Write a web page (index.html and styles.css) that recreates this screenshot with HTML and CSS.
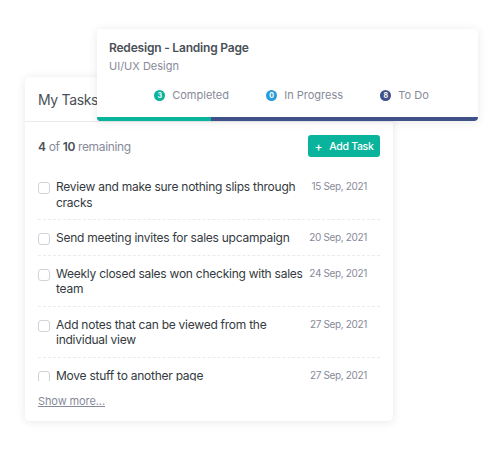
FILE: index.html
```html
<!DOCTYPE html>
<html>
<head>
<meta charset="utf-8">
<link rel="stylesheet" href="styles.css">
</head>
<body>
<div class="stage">
  <div class="card tasks">
    <div class="card-header">
      <h4 class="card-title">My Tasks</h4>
    </div>
    <div class="card-body">
      <div class="toolbar">
        <div class="remaining"><b>4</b> of <b>10</b> remaining</div>
        <button class="btn-add"><span class="plus">+</span>Add Task</button>
      </div>
      <ul class="task-list">
        <li class="task">
          <span class="check"></span>
          <span class="task-text">Review and make sure nothing slips through cracks</span>
          <span class="task-date">15 Sep, 2021</span>
        </li>
        <li class="task">
          <span class="check"></span>
          <span class="task-text">Send meeting invites for sales upcampaign</span>
          <span class="task-date">20 Sep, 2021</span>
        </li>
        <li class="task">
          <span class="check"></span>
          <span class="task-text">Weekly closed sales won checking with sales team</span>
          <span class="task-date">24 Sep, 2021</span>
        </li>
        <li class="task">
          <span class="check"></span>
          <span class="task-text">Add notes that can be viewed from the individual view</span>
          <span class="task-date">27 Sep, 2021</span>
        </li>
        <li class="task">
          <span class="check"></span>
          <span class="task-text">Move stuff to another page</span>
          <span class="task-date">27 Sep, 2021</span>
        </li>
      </ul>
      <a class="show-more" href="#">Show more...</a>
    </div>
  </div>

  <div class="card project">
    <div class="project-body">
      <h5 class="project-title">Redesign - Landing Page</h5>
      <p class="project-sub">UI/UX Design</p>
      <div class="stats">
        <span class="stat"><span class="dot dot-success">3</span>Completed</span>
        <span class="stat"><span class="dot dot-info">0</span>In Progress</span>
        <span class="stat"><span class="dot dot-primary">8</span>To Do</span>
      </div>
    </div>
    <div class="progress">
      <div class="progress-bar" style="width: 30%"></div>
    </div>
  </div>
</div>
</body>
</html>
```

FILE: styles.css
```css
* { box-sizing: border-box; }
html, body { margin: 0; background: #fff; }
body {
  font-family: "Inter", "Open Sans", sans-serif;
  color: #495057;
  width: 500px;
  height: 450px;
  overflow: hidden;
}
.stage {
  position: relative;
  padding: 77px 0 0 25px;
}
.card {
  background: #fff;
  border-radius: 5px;
  box-shadow: 0 1px 8px rgba(56, 65, 74, 0.12);
}
.tasks {
  width: 368px;
  height: 344px;
}
.card-header {
  height: 45px;
  display: flex;
  align-items: center;
  padding: 0 13px;
  border-bottom: 1px solid #e9ebec;
}
.card-title {
  margin: 0;
  font-size: 14px;
  font-weight: 400;
  letter-spacing: -0.35px;
  color: #495057;
}
.card-body {
  padding: 13px 13px 12px;
}
.toolbar {
  display: flex;
  justify-content: space-between;
  align-items: center;
  height: 22px;
}
.remaining {
  font-size: 12px;
  letter-spacing: -0.35px;
  color: #878a99;
}
.remaining b {
  font-weight: 600;
  color: #495057;
}
.btn-add {
  height: 22px;
  width: 72px;
  border: 0;
  border-radius: 3px;
  background: #0ab39c;
  color: #fff;
  font-family: inherit;
  font-size: 10.5px;
  letter-spacing: -0.3px;
  font-weight: 500;
  display: flex;
  align-items: center;
  justify-content: center;
  padding: 0;
}
.plus {
  font-size: 12px;
  margin-right: 7px;
}
.task-list {
  list-style: none;
  margin: 12px 0 0;
  padding: 0;
  height: 212px;
  overflow: hidden;
}
.task {
  display: grid;
  grid-template-columns: 12px 1fr 58px;
  column-gap: 6px;
  align-items: start;
  padding: 10px 13px 9px 0;
  border-bottom: 1px dashed #e9ebec;
}
.check {
  width: 12px;
  height: 12px;
  border: 1px solid #ced4da;
  border-radius: 3px;
  margin-top: 3px;
}
.task-text {
  font-size: 12px;
  letter-spacing: -0.25px;
  line-height: 15.5px;
  color: #343a40;
}
.task-date {
  font-size: 10px;
  letter-spacing: -0.35px;
  line-height: 15.5px;
  color: #878a99;
  text-align: right;
  white-space: nowrap;
}
.show-more {
  display: inline-block;
  margin-top: 12px;
  font-size: 11px;
  letter-spacing: -0.1px;
  line-height: 16px;
  color: #878a99;
}
.project {
  position: absolute;
  left: 97px;
  top: 29px;
  width: 381px;
  height: 92px;
  overflow: hidden;
  border-radius: 4px;
  display: flex;
  flex-direction: column;
}
.project-body {
  flex: 1;
  padding: 10px 12px 0;
}
.project-title {
  margin: 0;
  font-size: 12px;
  letter-spacing: -0.2px;
  line-height: 17px;
  font-weight: 600;
  color: #495057;
}
.project-sub {
  margin: 3px 0 0;
  font-size: 11px;
  line-height: 15px;
  color: #878a99;
}
.stats {
  display: flex;
  justify-content: space-evenly;
  margin-top: 13px;
  padding-left: 8px;
  font-size: 11px;
  line-height: 16px;
  color: #878a99;
}
.stat {
  display: flex;
  align-items: center;
}
.dot {
  width: 11px;
  height: 11px;
  border-radius: 50%;
  color: #fff;
  font-size: 7px;
  font-weight: 700;
  line-height: 11px;
  text-align: center;
  margin-right: 7px;
}
.dot-success { background: #0ab39c; }
.dot-info { background: #299cdb; }
.dot-primary { background: #405189; }
.progress {
  height: 4px;
  background: #405189;
  display: flex;
}
.progress-bar {
  background: #0ab39c;
  height: 100%;
}
```
